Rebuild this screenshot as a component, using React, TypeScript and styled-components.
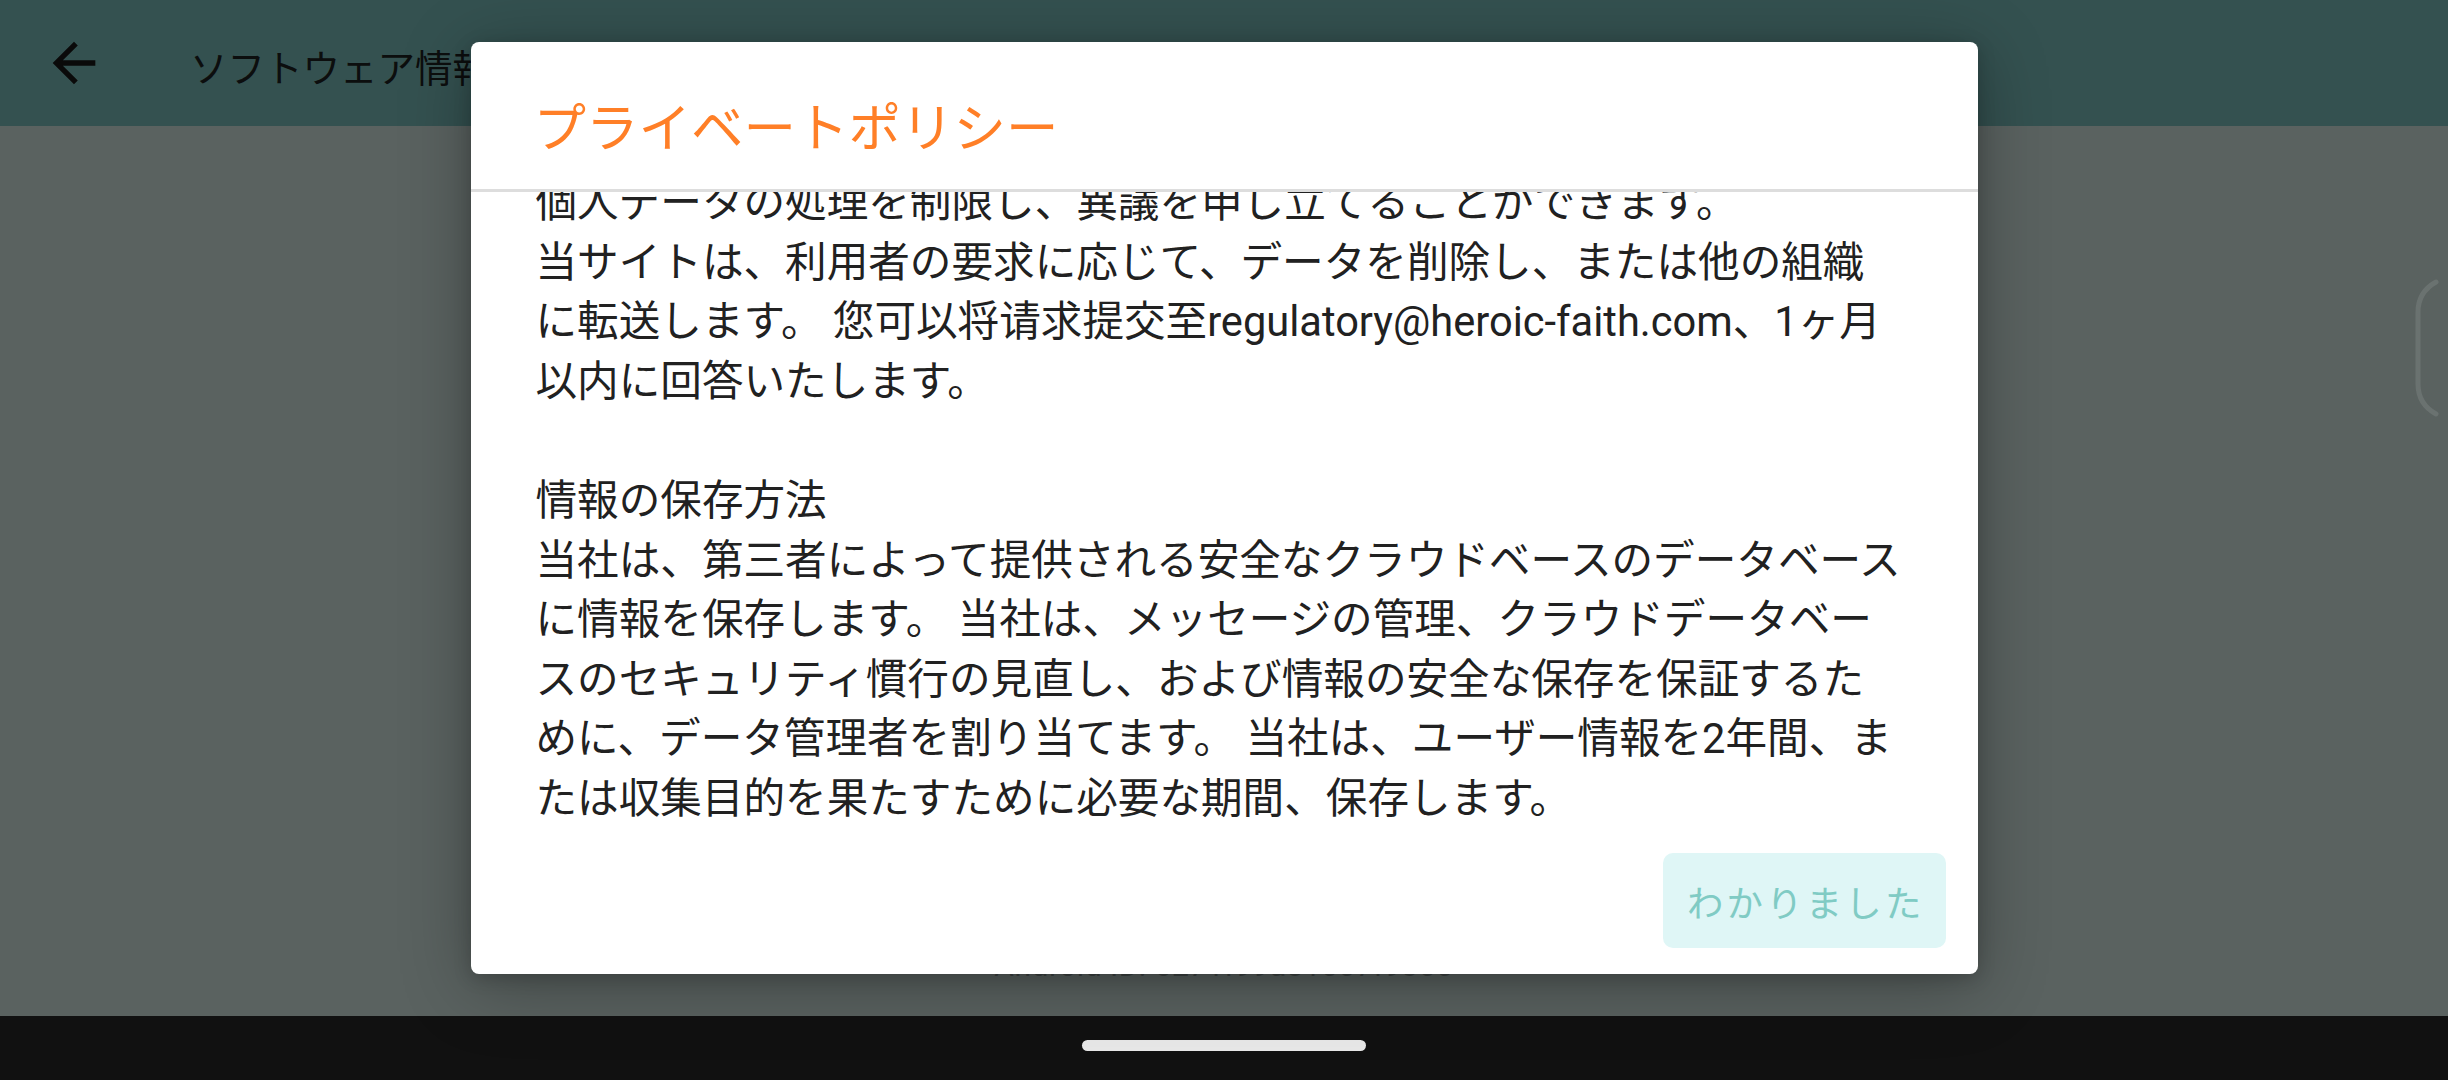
import * as React from "react";
import styled, { createGlobalStyle } from "styled-components";

const GlobalStyle = createGlobalStyle`
  html, body {
    margin: 0;
    padding: 0;
    background: #111111;
  }
  body {
    font-family: Roboto, "Noto Sans CJK JP", sans-serif;
  }
`;

const Screen = styled.div`
  position: relative;
  width: 2448px;
  height: 1080px;
  display: flex;
  flex-direction: column;
  overflow: hidden;
`;

const AppArea = styled.div`
  position: relative;
  flex: 1;
  display: flex;
  flex-direction: column;
  background: #e2f5f1;
`;

const TopBar = styled.header`
  height: 126px;
  flex: none;
  display: flex;
  align-items: center;
  background: #83cbc8;
  padding-left: 42px;
  gap: 84px;
`;

const BackButton = styled.div`
  width: 64px;
  height: 64px;
  display: flex;
  align-items: center;
  justify-content: center;
  color: #1a1a1a;
`;

const BarTitle = styled.div`
  font-size: 37.5px;
  color: #1f2525;
  padding-top: 4px;
`;

const Content = styled.main`
  flex: 1;
  display: flex;
  flex-direction: column;
  justify-content: flex-end;
  align-items: center;
  padding-bottom: 33px;
`;

const FaintInfo = styled.div`
  font-size: 30px;
  color: #9aaaa8;
  letter-spacing: 0.5px;
`;

const Scrim = styled.div`
  position: absolute;
  inset: 0;
  background: rgba(0, 0, 0, 0.6);
  display: flex;
  align-items: center;
  justify-content: center;
`;

const Dialog = styled.section`
  width: 1507px;
  height: 932px;
  background: #ffffff;
  border-radius: 8px;
  display: flex;
  flex-direction: column;
  overflow: hidden;
  box-shadow: 0 12px 70px rgba(0, 0, 0, 0.3), 0 4px 18px rgba(0, 0, 0, 0.18);
`;

const DialogHeader = styled.div`
  flex: none;
  height: 147px;
  box-sizing: border-box;
  padding: 53px 65px 0 63px;
`;

const DialogTitle = styled.h2`
  margin: 0;
  font-size: 52.5px;
  line-height: 68px;
  font-weight: 400;
  color: #ff7f27;
`;

const Divider = styled.div`
  flex: none;
  height: 3px;
  background: #dddddd;
`;

const DialogBody = styled.div`
  flex: 1;
  overflow: hidden;
  padding: 0 65px;
`;

const BodyText = styled.div`
  margin-top: -19px;
  font-size: 41.6px;
  line-height: 59.6px;
  color: #212121;
`;

const Line = styled.div`
  white-space: pre;
  height: 59.6px;
`;

const Actions = styled.div`
  flex: none;
  display: flex;
  justify-content: flex-end;
  padding: 0 32px 26px;
`;

const ActionButton = styled.button`
  height: 95px;
  border: none;
  border-radius: 10px;
  background: #dff6f6;
  color: #80cbc4;
  font-family: Roboto, "Noto Sans CJK JP", sans-serif;
  font-size: 36.4px;
  letter-spacing: 3.2px;
  padding: 0 21px 0 24px;
  cursor: pointer;
`;

const EdgeHint = styled.svg`
  position: absolute;
  right: 8px;
  top: 278px;
`;

const NavBar = styled.nav`
  flex: none;
  height: 64px;
  background: #111111;
  display: flex;
  justify-content: center;
  padding-top: 24px;
  box-sizing: border-box;
`;

const HomePill = styled.div`
  width: 284px;
  height: 11px;
  border-radius: 6px;
  background: #e8e8e8;
`;

const bodyLines = [
  "個人データの処理を制限し、異議を申し立てることができます。",
  "当サイトは、利用者の要求に応じて、データを削除し、または他の組織",
  "に転送します。 您可以将请求提交至regulatory@heroic-faith.com、1ヶ月",
  "以内に回答いたします。",
  "",
  "情報の保存方法",
  "当社は、第三者によって提供される安全なクラウドベースのデータベース",
  "に情報を保存します。 当社は、メッセージの管理、クラウドデータベー",
  "スのセキュリティ慣行の見直し、および情報の安全な保存を保証するた",
  "めに、データ管理者を割り当てます。 当社は、ユーザー情報を2年間、ま",
  "たは収集目的を果たすために必要な期間、保存します。",
];

function ArrowBack() {
  return (
    <svg width="64" height="64" viewBox="0 0 24 24" fill="currentColor">
      <path d="M20 11H7.83l5.59-5.59L12 4l-8 8 8 8 1.41-1.41L7.83 13H20v-2z" />
    </svg>
  );
}

export default function App() {
  return (
    <>
      <GlobalStyle />
      <Screen>
        <AppArea>
          <TopBar>
            <BackButton>
              <ArrowBack />
            </BackButton>
            <BarTitle>ソフトウェア情報</BarTitle>
          </TopBar>
          <Content>
            <FaintInfo>Android ID: 6271f99a81007f9300</FaintInfo>
          </Content>
          <Scrim>
            <Dialog>
              <DialogHeader>
                <DialogTitle>プライベートポリシー</DialogTitle>
              </DialogHeader>
              <Divider />
              <DialogBody>
                <BodyText>
                  {bodyLines.map((line, i) => (
                    <Line key={i}>{line}</Line>
                  ))}
                </BodyText>
              </DialogBody>
              <Actions>
                <ActionButton>わかりました</ActionButton>
              </Actions>
            </Dialog>
          </Scrim>
          <EdgeHint width="30" height="142" viewBox="0 0 30 142">
            <path
              d="M26 4 Q 8 14 8 34 L 8 106 Q 8 126 26 136"
              fill="none"
              stroke="rgba(255,255,255,0.1)"
              strokeWidth="5"
              strokeLinecap="round"
            />
          </EdgeHint>
        </AppArea>
        <NavBar>
          <HomePill />
        </NavBar>
      </Screen>
    </>
  );
}
